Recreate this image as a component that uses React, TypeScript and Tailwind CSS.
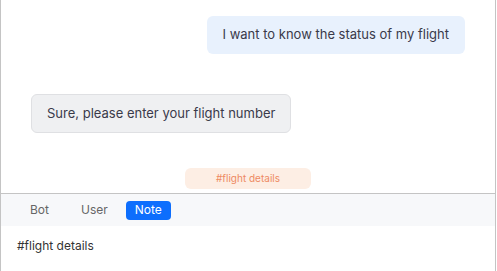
export default function App() {
  return (
    <div
      className="w-[496px] h-[271px] border-x border-[#c4c4c4] bg-white flex flex-col"
      style={{ fontFamily: "Inter, 'Noto Sans', sans-serif" }}
    >
      <div className="h-[194px] border-b border-[#c4c4c4] px-[30px] pt-[16px] flex flex-col">
        <div className="flex justify-end">
          <div className="h-[38px] px-[16px] flex items-center rounded-md bg-[#e8f1fd] text-[13px] text-[#3a3a4a]">
            I want to know the status of my flight
          </div>
        </div>
        <div className="flex justify-start mt-[40px]">
          <div className="h-[39px] px-[15px] flex items-center rounded-md bg-[#eff0f2] border border-[#dfe0e3] text-[13px] text-[#3a3a4a]">
            Sure, please enter your flight number
          </div>
        </div>
        <div className="flex justify-center mt-[35px]">
          <div className="w-[126px] h-[21px] rounded-md bg-[#fdeee4] flex items-center justify-center text-[10px] text-[#ee8a62]">
            #flight details
          </div>
        </div>
      </div>
      <div className="h-[32px] bg-[#f7f8fa] flex items-center pl-[29px] text-[12px]">
        <span className="text-[#666]">Bot</span>
        <span className="ml-[32px] text-[#666]">User</span>
        <button className="ml-[18px] h-[19px] px-[9px] rounded-[4px] bg-[#0d6efd] text-white leading-none">
          Note
        </button>
      </div>
      <div className="px-[16px] pt-[11px] text-[12px] text-[#333]">#flight details</div>
    </div>
  );
}
